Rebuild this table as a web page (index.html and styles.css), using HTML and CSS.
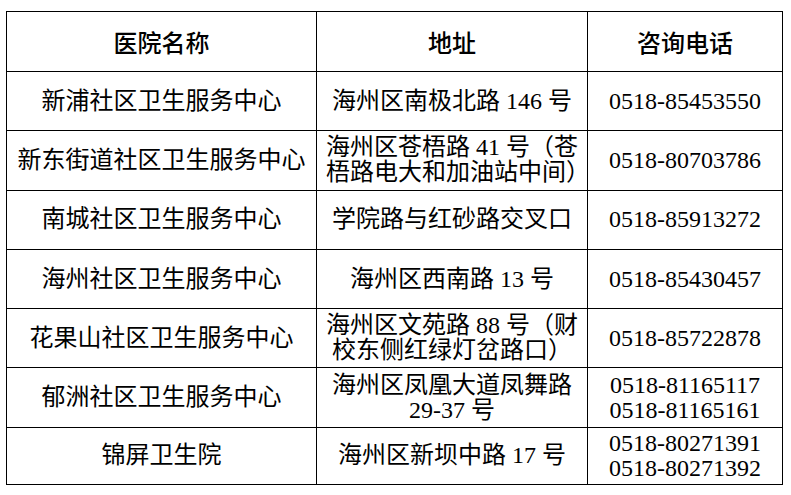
FILE: index.html
```html
<!DOCTYPE html>
<html lang="zh-CN">
<head>
<meta charset="utf-8">
<title>社区卫生服务中心</title>
<link rel="stylesheet" href="styles.css">
</head>
<body>
<table class="clinics">
  <colgroup>
    <col class="c-name">
    <col class="c-addr">
    <col class="c-tel">
  </colgroup>
  <thead>
    <tr class="head">
      <th>医院名称</th>
      <th>地址</th>
      <th>咨询电话</th>
    </tr>
  </thead>
  <tbody>
    <tr>
      <td>新浦社区卫生服务中心</td>
      <td>海州区南极北路 146 号</td>
      <td>0518-85453550</td>
    </tr>
    <tr>
      <td>新东街道社区卫生服务中心</td>
      <td><span class="ln">海州区苍梧路 41 号（苍</span><br><span class="ln">梧路电大和加油站中间<span class="hang">）</span></span></td>
      <td>0518-80703786</td>
    </tr>
    <tr>
      <td>南城社区卫生服务中心</td>
      <td>学院路与红砂路交叉口</td>
      <td>0518-85913272</td>
    </tr>
    <tr>
      <td>海州社区卫生服务中心</td>
      <td>海州区西南路 13 号</td>
      <td>0518-85430457</td>
    </tr>
    <tr>
      <td>花果山社区卫生服务中心</td>
      <td><span class="ln">海州区文苑路 88 号（财</span><br><span class="ln">校东侧红绿灯岔路口）</span></td>
      <td>0518-85722878</td>
    </tr>
    <tr>
      <td>郁洲社区卫生服务中心</td>
      <td><span class="ln">海州区凤凰大道凤舞路</span><br><span class="ln">29-37 号</span></td>
      <td>0518-81165117<br>0518-81165161</td>
    </tr>
    <tr class="last">
      <td>锦屏卫生院</td>
      <td>海州区新坝中路 17 号</td>
      <td>0518-80271391<br>0518-80271392</td>
    </tr>
  </tbody>
</table>
</body>
</html>
```

FILE: styles.css
```css
html, body {
  margin: 0;
  padding: 0;
  background: #ffffff;
}

body {
  padding: 11px 0 0 6px;
}

.clinics {
  border-collapse: collapse;
  table-layout: fixed;
  width: 776px;
  color: #000000;
}

.c-name { width: 310px; }
.c-addr { width: 271px; }
.c-tel  { width: 195px; }

.clinics th,
.clinics td {
  border: 1px solid #000000;
  padding: 0;
  text-align: center;
  vertical-align: middle;
  white-space: nowrap;
  font-size: 24px;
  line-height: 25px;
}

.clinics th {
  font-family: "Noto Sans CJK SC", "Noto Sans", sans-serif;
  font-weight: 500;
}

.clinics td {
  font-family: "Liberation Serif", "Noto Sans CJK SC", serif;
  font-weight: 400;
}

.head th {
  height: 59px;
}

.clinics tbody td {
  height: 58.3px;
}

.clinics tbody tr.last td {
  height: 56px;
}

.ln {
  white-space: nowrap;
}

.hang {
  margin-right: -12px;
}
```
